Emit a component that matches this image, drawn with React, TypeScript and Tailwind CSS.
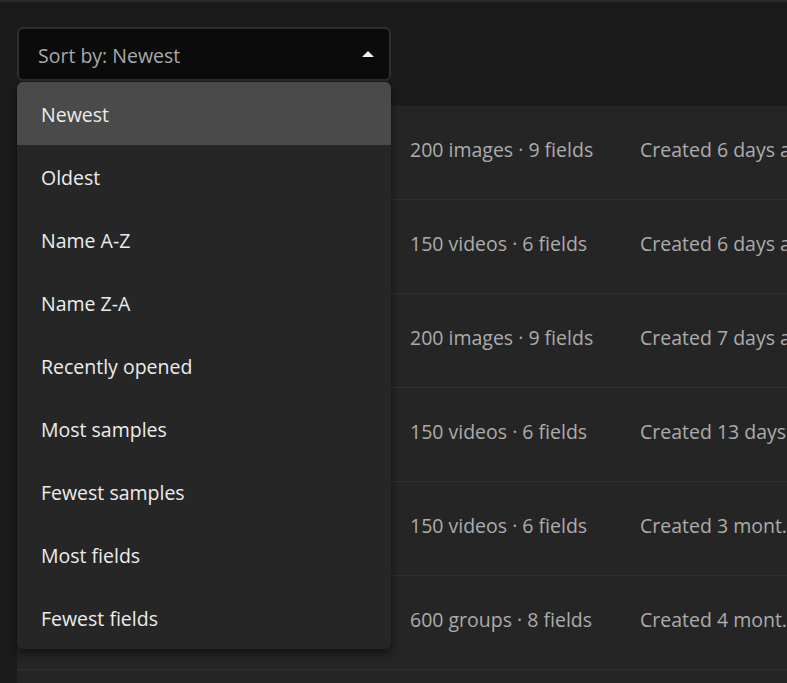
import React from "react";

const rows = [
  { meta: "200 images · 9 fields", created: "Created 6 days ago" },
  { meta: "150 videos · 6 fields", created: "Created 6 days ago" },
  { meta: "200 images · 9 fields", created: "Created 7 days ago" },
  { meta: "150 videos · 6 fields", created: "Created 13 days ago" },
  { meta: "150 videos · 6 fields", created: "Created 3 months ago" },
  { meta: "600 groups · 8 fields", created: "Created 4 months ago" },
  { meta: "200 images · 9 fields", created: "Created 5 months ago" },
];

const options = [
  "Newest",
  "Oldest",
  "Name A-Z",
  "Name Z-A",
  "Recently opened",
  "Most samples",
  "Fewest samples",
  "Most fields",
  "Fewest fields",
];

export default function App() {
  return (
    <div
      className="w-[787px] h-[683px] overflow-hidden bg-[#1b1b1b] border-t-2 border-[#2a2a2a] relative"
      style={{ fontFamily: '"Open Sans", "Noto Sans", sans-serif' }}
    >
      <div className="pl-[17px] pt-[25px] h-[104px]">
        <div className="relative w-[374px]">
          <div className="h-[54px] rounded-[6px] border-2 border-[#2e2e2e] bg-[#0b0b0b] flex items-center justify-between pl-[19px] pr-[15px]">
            <span className="text-[19.5px] text-[#a9a9a9] pt-[3px]">Sort by: Newest</span>
            <svg width="12" height="6" viewBox="0 0 12 6">
              <path d="M0 6 L6 0 L12 6 Z" fill="#f2f2f2" />
            </svg>
          </div>
          <div className="absolute left-0 top-[55px] w-[374px] z-10 bg-[#262626] rounded-[6px] overflow-hidden shadow-[0_4px_8px_rgba(0,0,0,0.55)]">
            {options.map((o, i) => (
              <div
                key={o}
                className={
                  "h-[63px] flex items-center pl-[24px] pt-[3px] text-[19.5px] text-[#ececec] " +
                  (i === 0 ? "bg-[#4a4a4a]" : "")
                }
              >
                {o}
              </div>
            ))}
          </div>
        </div>
      </div>
      <div className="ml-[17px] bg-[#252525]">
        {rows.map((r, i) => (
          <div
            key={i}
            className="h-[94px] border-b border-[#2f2f2f] flex items-center pb-[5px] whitespace-nowrap text-[19.5px] text-[#acacac]"
          >
            <div className="w-[393px] shrink-0" />
            <div className="w-[230px] shrink-0">{r.meta}</div>
            <div className="w-[168px] shrink-0 overflow-hidden text-ellipsis">{r.created}</div>
          </div>
        ))}
      </div>
    </div>
  );
}
